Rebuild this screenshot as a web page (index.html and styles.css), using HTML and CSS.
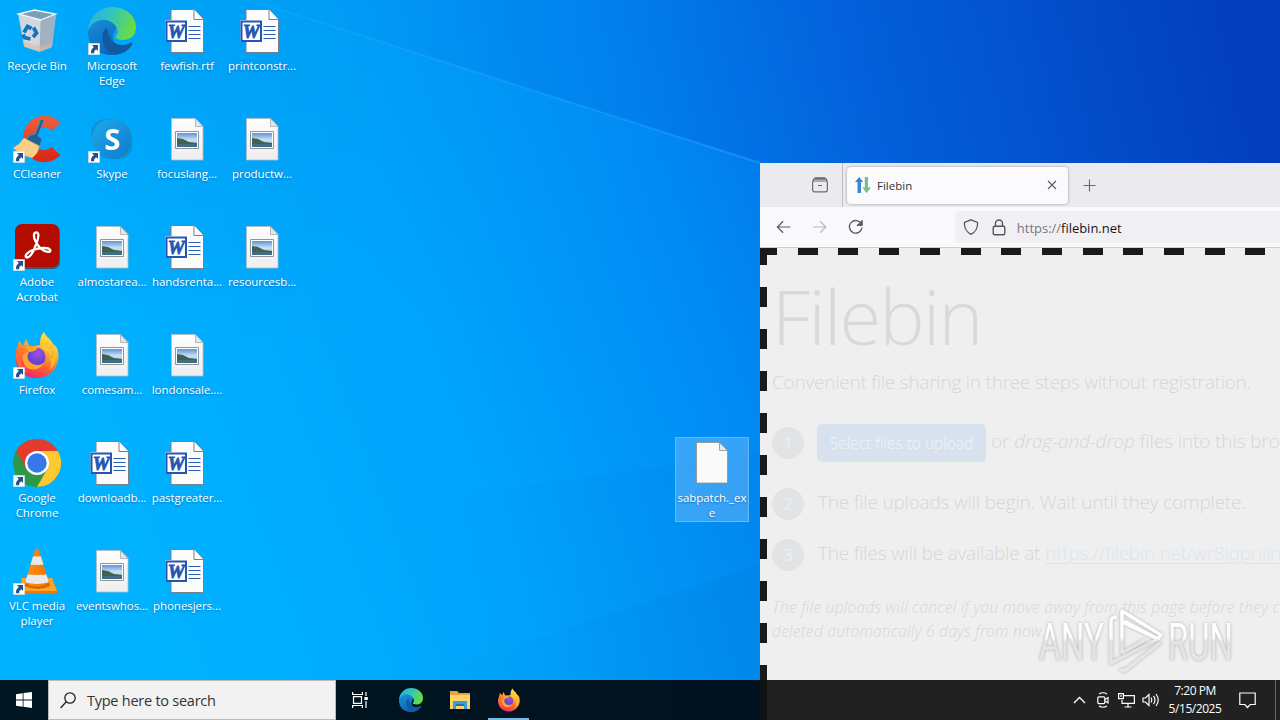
FILE: index.html
```html
<!DOCTYPE html>
<html lang="en">
<head>
<meta charset="utf-8">
<title>Desktop</title>
<link rel="stylesheet" href="styles.css">
</head>
<body>
<svg width="0" height="0" class="defs">
  <defs>
    <linearGradient id="gPaper" x1="0" y1="0" x2="0" y2="1"><stop offset="0" stop-color="#fdfdfd"/><stop offset="1" stop-color="#eeeeee"/></linearGradient>
    <linearGradient id="gSky" x1="0" y1="0" x2="0" y2="1"><stop offset="0" stop-color="#5c93dc"/><stop offset=".5" stop-color="#cfe2f2"/><stop offset="1" stop-color="#7fa9bb"/></linearGradient>
    <linearGradient id="gEdgeTop" x1="0" y1="0" x2="1" y2=".3"><stop offset="0" stop-color="#2cb0dc"/><stop offset=".5" stop-color="#30c4c0"/><stop offset="1" stop-color="#66dc48"/></linearGradient>
    <linearGradient id="gEdgeMid" x1="0" y1="0" x2=".6" y2="1"><stop offset="0" stop-color="#1890dc"/><stop offset="1" stop-color="#0c62b4"/></linearGradient>
    <linearGradient id="gFox" x1=".8" y1="0" x2=".3" y2="1"><stop offset="0" stop-color="#fff04a"/><stop offset=".35" stop-color="#ffb42c"/><stop offset=".65" stop-color="#ff6434"/><stop offset="1" stop-color="#f0206c"/></linearGradient>
    <radialGradient id="gFoxCore" cx=".6" cy=".3" r=".7"><stop offset="0" stop-color="#a050e8"/><stop offset="1" stop-color="#5540c0"/></radialGradient>
    <linearGradient id="gBin" x1="0" y1="0" x2="1" y2="1"><stop offset="0" stop-color="#a3c8dc"/><stop offset=".55" stop-color="#cfd8dc"/><stop offset="1" stop-color="#8fa6b4"/></linearGradient>
    <linearGradient id="gSkype" x1="0" y1="0" x2="1" y2="1"><stop offset="0" stop-color="#1fa8ea"/><stop offset="1" stop-color="#0d7ccc"/></linearGradient>
    <linearGradient id="gCc" x1="0" y1="0" x2="0" y2="1"><stop offset="0" stop-color="#ec5a3c"/><stop offset="1" stop-color="#d82c18"/></linearGradient>
    <linearGradient id="gCone" x1="0" y1="0" x2="1" y2="0"><stop offset="0" stop-color="#ff9818"/><stop offset="1" stop-color="#ee6a00"/></linearGradient>
    <clipPath id="cone"><path d="M22 3q2-3 4 0l10 33q-12 7-24 0z"/></clipPath>
    <symbol id="arrow" viewBox="0 0 12 12"><path fill="#fff" stroke="#c8d4dc" stroke-width=".6" d="M.3.3h11.4v11.4H.3z"/><path fill="#25508c" d="M4 2h6v6L8.200 6.300C6.500 7.500 6 8.600 6.200 10.300H3.100C2.600 7.500 3.800 5.500 5.900 4z"/></symbol>
    <symbol id="bin" viewBox="0 0 48 48">
      <path fill="url(#gBin)" stroke="#b8ccd6" stroke-width=".8" d="M5.500 7l22 6 15-5-4 32-12 4.500-15-5z"/>
      <path fill="#a0b2bf" d="M27.500 13l15-5-4 32-12 4z"/><path fill="#d4dade" d="M5.500 7l22 6-1 31-15-5z" opacity=".8"/>
      <path fill="#78a0b8" stroke="#f0f6f8" stroke-width="1.300" d="M5.500 7l16-4 21 4-15 6z"/>
      <path fill="#e8b49c" opacity=".5" d="M10.500 34l16 5 12.500-3-1 4-11.500 4.500-15-5z"/>
      <g fill="none" stroke="#1474be" stroke-width="3.800"><path d="M11 25.500l3.500-6 4 2M20.500 20.500l3 5.500-3.500 4M17.500 32l-6-1.500-1.500-3"/></g>
    </symbol>
    <symbol id="edge" viewBox="0 0 48 48">
      <path fill="url(#gEdgeMid)" d="M0 25C0 16 8 12 17 12c10 0 13 7 10 12-3 4-3 9 1 13 4 3 13 2 16 0-4 7-11 11-20 11C9 48 0 38 0 25z"/>
      <path fill="url(#gEdgeTop)" d="M0 24C1 9 12 0 24 0c14 0 24 9 24 20 0 8-5 13-13 13-6 0-8-2-7-4 3-2 2-7-1-11C19 9 4 12 0 24z"/>
      <path fill="#115a9f" d="M19 20c-8 7-5 20 4 27 9 2 17-3 21-9 1-2 0-3-2-2-3 2-6 2-9 2-9-1-13-7-14-18z"/>
    </symbol>
    <symbol id="fox" viewBox="0 0 48 48">
      <path fill="url(#gFox)" d="M6 10c2 1 3 4 4 5l3-7 4 8 10-2c0-6 1-10 4-13 2 5 7 7 9 12 2 1 3 3 4 4 5 13-3 29-19 30C10 48 2 36 2 26c0-5 2-9 4-16z"/>
      <circle cx="23" cy="26" r="9.500" fill="url(#gFoxCore)"/>
      <path fill="#ffa32c" d="M12 17c5-3 10-2 13 0-3 3-6 4-9 4-2 3-2 6 0 9 4 5 10 5 15 2-4 8-16 9-20 1-2-6-2-11 1-16z"/>
      <path fill="#ffcd36" d="M28 14c8 0 12 8 9 16 3-2 5-5 5-9 2 8-1 15-6 18 5-8 3-17-5-21-2-1-3-2-3-4z" opacity=".8"/>
      <path fill="#fc7836" d="M3 23c4-6 7-6 9-6l5 4c-5 0-8 3-8 8-1 6 3 11 8 13C8 41 2 33 3 23z" opacity=".65"/>
    </symbol>
    <symbol id="skype" viewBox="0 0 48 48">
      <circle cx="17" cy="18" r="14" fill="#138fd2" opacity=".8"/><circle cx="31" cy="31" r="13" fill="#1188cd" opacity=".8"/><circle cx="24" cy="24" r="20" fill="url(#gSkype)"/>
      <text x="24.300" y="34.500" text-anchor="middle" class="skype-s">S</text>
    </symbol>
    <symbol id="ccleaner" viewBox="0 0 48 48">
      <path fill="none" stroke="url(#gCc)" stroke-width="12" d="M43 12C33 1 15 8 16 25c0 16 17 21 27 11"/>
      <path fill="#1d6199" stroke="#4a94bd" stroke-width=".8" d="M28 4l3 1-6 16 4 3-2 7-14-6 4-5 5-1z"/>
      <path fill="#f8d089" stroke="#d9a754" stroke-width=".7" d="M11 23l15 8c0 5-3 9-7 12l-6-2-6 1-2-5-5-4 6-4z"/><path stroke="#e6bd76" stroke-width=".6" fill="none" d="M12 27l-5 8M17 29l-5 9M22 32l-5 8"/>
    </symbol>
    <symbol id="acrobat" viewBox="0 0 48 48">
      <rect x="2" y="2" width="45" height="44" rx="7" fill="#5e2632" opacity=".65"/><rect x="2" y="1" width="44" height="43" rx="7" fill="#b30b00"/>
      <path fill="none" stroke="#fff" stroke-width="2.300" stroke-linejoin="round" d="M23.500 9.500c3 0 2 6-.5 12-2.500 7-6 13-9 13-3-.5-1-5 6-7.500 6-2.200 15-3 17-.3 1.800 3-4.500 3.300-9-1-4-4-7.500-10-7-14 .2-1.300 1-2.200 2.500-2.200z"/>
    </symbol>
    <symbol id="chrome" viewBox="0 0 48 48">
      <circle cx="24" cy="24" r="24" fill="#2f9748"/>
      <path fill="#e33b2e" d="M3.200 12A24 24 0 0 1 44.800 12L24 12 13.600 30z"/>
      <path fill="#fcc932" d="M44.800 12A24 24 0 0 1 24 48l10.400-18L24 12z"/>
      <circle cx="24" cy="24" r="12" fill="#fff"/><circle cx="24" cy="24" r="9.700" fill="#3478ec"/>
    </symbol>
    <symbol id="vlc" viewBox="0 0 48 48">
      <path fill="#f07800" d="M9 31h30l5 13v3H7v-3z"/><path fill="#ffa22a" d="M9 31h30l5 13H7z"/>
      <path fill="#dd6500" d="M12 34h24l1 5q-12 6-26 0z"/>
      <g clip-path="url(#cone)"><path fill="url(#gCone)" d="M8 0h32v42H8z"/><path fill="#e9e9e9" d="M10 8q14 3 28 0v9q-14 2-28 0zM8 26q16 4 32 0v8q-16 6-32 0z"/></g>
    </symbol>
    <symbol id="word" viewBox="0 0 48 48">
      <g transform="translate(-.5 0)">
      <path fill="#fcfcfc" stroke="#74808c" d="M8.500 2.500h23l9.500 10v33H8.500z"/><path fill="#fff" stroke="#74808c" d="M31.500 2.500v10H41"/>
      <path stroke="#2c5cac" d="M26 19.500h12M26 23.500h12M26 27.500h12M26 31.500h12" stroke-width="1.200"/>
      <path fill="#fff" d="M3 13h22v22H3z"/><path fill="#fff" stroke="#2456b2" stroke-width="2" d="M4 14.500h19.500v19.500H4z"/>
      <text x="13.700" y="31" text-anchor="middle" class="word-w" textLength="17" lengthAdjust="spacingAndGlyphs">W</text>
      </g>
    </symbol>
    <symbol id="image" viewBox="0 0 48 48">
      <path fill="url(#gPaper)" stroke="#b4bcc0" stroke-width=".8" d="M8.500 3.500h24l7.500 8v33.500H8.500z"/><path fill="#dfe8ec" stroke="#a3aaae" stroke-width=".8" d="M32.500 3.500v8H40z"/>
      <path fill="#fff" stroke="#8c969c" d="M12.500 16.500h23v17h-23z"/><path fill="url(#gSky)" d="M14 18h20v14H14z"/>
      <path fill="#3d6350" d="M14 23l6 1 6 3 8 1v1H14z"/><path fill="#416e86" d="M14 29h20v3H14z"/>
    </symbol>
    <symbol id="blank" viewBox="0 0 48 48">
      <path fill="#fafafa" stroke="#948e88" stroke-width=".8" d="M8.500 3.500h23l8 8V44H8.500z"/><path fill="#e4e8ea" stroke="#948e88" stroke-width=".8" d="M31.500 3.500v8h8z"/>
    </symbol>
  </defs>
</svg>

<main class="desktop">
  <svg class="wallpaper" width="1280" height="720" viewBox="0 0 1280 720">
    <defs>
      <linearGradient id="w1" gradientUnits="userSpaceOnUse" x1="100" y1="480" x2="1240" y2="60"><stop offset="0" stop-color="#00b2ff"/><stop offset=".3" stop-color="#00a4fc"/><stop offset=".52" stop-color="#008af4"/><stop offset=".7" stop-color="#036ae2"/><stop offset="1" stop-color="#0242c2"/></linearGradient>
      <linearGradient id="w2" gradientUnits="userSpaceOnUse" x1="250" y1="0" x2="1280" y2="0"><stop offset="0" stop-color="#0090f0" stop-opacity="0"/><stop offset=".25" stop-color="#0078e8" stop-opacity=".35"/><stop offset=".6" stop-color="#0452d0" stop-opacity=".4"/><stop offset="1" stop-color="#0338b4" stop-opacity=".5"/></linearGradient>
      <linearGradient id="w3" gradientUnits="userSpaceOnUse" x1="420" y1="0" x2="800" y2="0"><stop offset="0" stop-color="#0080e0" stop-opacity="0"/><stop offset="1" stop-color="#0078d8" stop-opacity=".24"/></linearGradient>
      <linearGradient id="w4" gradientUnits="userSpaceOnUse" x1="250" y1="0" x2="760" y2="0"><stop offset="0" stop-color="#40b4ff" stop-opacity=".15"/><stop offset="1" stop-color="#40b4ff" stop-opacity=".35"/></linearGradient>
      <radialGradient id="w5" gradientUnits="userSpaceOnUse" cx="0" cy="0" r="1" gradientTransform="translate(250 0) scale(480 340)"><stop offset="0" stop-color="#0098ee" stop-opacity=".4"/><stop offset="1" stop-color="#0098ee" stop-opacity="0"/></radialGradient>
    </defs>
    <path fill="url(#w1)" d="M0 0h1280v720H0z"/>
    <path fill="url(#w5)" d="M0 0h760v400H0z"/>
    <path fill="url(#w2)" d="M250 0h1030v330L760 163z"/>
    <path stroke="url(#w4)" stroke-width="2" fill="none" d="M250 0l510 163"/>
    <path fill="url(#w3)" d="M200 530l560-77v267H200z"/>
    <path fill="url(#w3)" d="M380 690l380-125v155H380z"/>
  </svg>

  <section class="icons">
    <div class="item"><div class="pic"><svg><use href="#bin"/></svg></div><span>Recycle Bin</span></div>
    <div class="item"><div class="pic"><svg><use href="#ccleaner"/></svg><svg class="link"><use href="#arrow"/></svg></div><span>CCleaner</span></div>
    <div class="item"><div class="pic"><svg><use href="#acrobat"/></svg><svg class="link"><use href="#arrow"/></svg></div><span>Adobe<br>Acrobat</span></div>
    <div class="item"><div class="pic"><svg><use href="#fox"/></svg><svg class="link"><use href="#arrow"/></svg></div><span>Firefox</span></div>
    <div class="item"><div class="pic"><svg><use href="#chrome"/></svg><svg class="link"><use href="#arrow"/></svg></div><span>Google<br>Chrome</span></div>
    <div class="item"><div class="pic"><svg><use href="#vlc"/></svg><svg class="link"><use href="#arrow"/></svg></div><span>VLC media<br>player</span></div>

    <div class="item"><div class="pic"><svg><use href="#edge"/></svg><svg class="link"><use href="#arrow"/></svg></div><span>Microsoft<br>Edge</span></div>
    <div class="item"><div class="pic"><svg><use href="#skype"/></svg><svg class="link"><use href="#arrow"/></svg></div><span>Skype</span></div>
    <div class="item"><div class="pic"><svg><use href="#image"/></svg></div><span>almostarea...</span></div>
    <div class="item"><div class="pic"><svg><use href="#image"/></svg></div><span>comesam...</span></div>
    <div class="item"><div class="pic"><svg><use href="#word"/></svg></div><span>downloadb...</span></div>
    <div class="item"><div class="pic"><svg><use href="#image"/></svg></div><span>eventswhos...</span></div>

    <div class="item"><div class="pic"><svg><use href="#word"/></svg></div><span>fewfish.rtf</span></div>
    <div class="item"><div class="pic"><svg><use href="#image"/></svg></div><span>focuslang...</span></div>
    <div class="item"><div class="pic"><svg><use href="#word"/></svg></div><span>handsrenta...</span></div>
    <div class="item"><div class="pic"><svg><use href="#image"/></svg></div><span>londonsale....</span></div>
    <div class="item"><div class="pic"><svg><use href="#word"/></svg></div><span>pastgreater...</span></div>
    <div class="item"><div class="pic"><svg><use href="#word"/></svg></div><span>phonesjers...</span></div>

    <div class="item"><div class="pic"><svg><use href="#word"/></svg></div><span>printconstr...</span></div>
    <div class="item"><div class="pic"><svg><use href="#image"/></svg></div><span>productw...</span></div>
    <div class="item"><div class="pic"><svg><use href="#image"/></svg></div><span>resourcesb...</span></div>
  </section>

  <div class="item selected"><div class="pic"><svg><use href="#blank"/></svg></div><span>sabpatch._ex<br>e</span></div>

  <section class="browser">
    <header class="tabs">
      <div class="tabs-left"><svg width="18" height="18" viewBox="0 0 18 18" fill="none" stroke="#6a6a74" stroke-width="1.200"><path d="M3.500 1.800h11M2.800 5h12.400a1.200 1.200 0 0 1 1.200 1.200v7.600a2 2 0 0 1-2 2H3.600a2 2 0 0 1-2-2V6.200A1.200 1.200 0 0 1 2.800 5zM1.600 6.500l1-3.300h12.800l1 3.300M7 9.500h4"/></svg></div>
      <div class="tab">
        <svg width="16" height="16" viewBox="0 0 16 16"><path fill="#3a86d0" d="M4.200 0l4 5H6v11H2.500V5H0z"/><path fill="#7cbc84" d="M9.800 0h3.200v10.500H16L11.500 16l-4.200-5.500h2.500z"/></svg>
        <span class="tab-title">Filebin</span>
        <svg class="close" width="10" height="10" viewBox="0 0 10 10" stroke="#5a5a62" stroke-width="1.100"><path d="M1 1l8 8M9 1L1 9"/></svg>
      </div>
      <svg class="plus" width="13" height="13" viewBox="0 0 13 13" stroke="#6a6a74" stroke-width="1.100"><path d="M6.500.5v12M.5 6.500h12"/></svg>
    </header>
    <nav class="toolbar">
      <svg width="16" height="16" viewBox="0 0 16 16" fill="none" stroke="#5a5a62" stroke-width="1.300"><path d="M15 8H1.500M7.500 2L1.500 8l6 6"/></svg>
      <svg width="16" height="16" viewBox="0 0 16 16" fill="none" stroke="#b9b9c0" stroke-width="1.300"><path d="M1 8h13.500M8.500 2l6 6-6 6"/></svg>
      <svg width="16" height="16" viewBox="0 0 16 16" fill="none" stroke="#5a5a62" stroke-width="1.400"><path d="M14 5A6.600 6.600 0 1 0 14.600 8.500M14.500 1v5h-5"/><path d="M14.500 2v4h-4z" fill="#5a5a62"/></svg>
      <div class="url">
        <svg width="16" height="16" viewBox="0 0 16 16" fill="none" stroke="#55555e" stroke-width="1.300"><path d="M8 .8l6.500 2.700C15 9 12 13.500 8 15.300 4 13.500 1 9 1.500 3.500z"/></svg>
        <svg width="14" height="17" viewBox="0 0 14 17" fill="none" stroke="#55555e" stroke-width="1.400"><rect x="1.200" y="7.200" width="11.600" height="8.600" rx="1.500"/><path d="M3.500 7V4.500a3.500 3.500 0 0 1 7 0V7"/></svg>
        <span class="address"><i>https://</i>filebin.net</span>
      </div>
    </nav>
    <article class="page">
      <h1>Filebin</h1>
      <p class="lead">Convenient file sharing in three steps without registration.</p>
      <div class="step s1"><b>1</b><span class="upload">Select files to upload</span><span class="or">or <em>drag-and-drop</em> files into this browser</span></div>
      <div class="step s2"><b>2</b><span class="t2">The file uploads will begin. Wait until they complete.</span></div>
      <div class="step s3"><b>3</b><span class="t3">The files will be available at <u>https://filebin.net/wr8jqpnjin</u></span></div>
      <p class="note"><span class="n1">The file uploads will cancel if you move away from this page before they complete.</span><br><span class="n2">deleted automatically 6 days from now.</span></p>
    </article>
  </section>

  <svg class="watermark" width="210" height="76" viewBox="0 0 210 76">
    <defs><linearGradient id="wm" gradientUnits="userSpaceOnUse" x1="0" y1="8" x2="0" y2="66"><stop offset="0" stop-color="#fff"/><stop offset=".42" stop-color="#fcfcfc"/><stop offset=".5" stop-color="#e2e2e2"/><stop offset="1" stop-color="#e8e8e8"/></linearGradient></defs>
    <g fill="url(#wm)">
      <text x="9" y="55" textLength="65" lengthAdjust="spacingAndGlyphs">ANY</text>
      <text x="138" y="55" textLength="65" lengthAdjust="spacingAndGlyphs">RUN</text>
    </g>
    <g fill="none" stroke="url(#wm)" stroke-width="3.500" stroke-linejoin="round">
      <path d="M92 48V6l39 24-3 4-34-18"/><path d="M87 12q-6 0-6 4v42l47-24-34-16"/><path d="M90 64q3 3 7 0l34-27M92 48l23-13"/>
    </g>
  </svg>

  <footer class="taskbar">
    <div class="start"><svg width="16" height="16" viewBox="0 0 16 16" fill="#fff"><path d="M0 2.200L6.700 1.200V7.500H0zM7.500 1.100L16 0V7.500H7.500zM0 8.400H6.700V14.700L0 13.800zM7.500 8.400H16V16L7.500 14.800z"/></svg></div>
    <div class="search"><svg width="16" height="17" viewBox="0 0 16 17" fill="none" stroke="#222" stroke-width="1.300"><circle cx="10" cy="6" r="5.200"/><path d="M6.300 9.800L.6 16"/></svg><span>Type here to search</span></div>
    <div class="task"><svg width="16" height="16" viewBox="0 0 16 16" fill="none" stroke="#fff" stroke-width="1.200"><path d="M.6 0v2.500h9.800V0M.6 16v-2.500h9.800V16M1.500 4.600h8v6.800h-8zM14 0v4M14 9v7"/><path fill="#fff" d="M13 5.500h2.200v2H13z"/></svg></div>
    <div class="task"><svg width="24" height="24"><use href="#edge"/></svg></div>
    <div class="task"><svg width="22" height="20" viewBox="0 0 22 20"><path fill="#e8a33a" d="M1 1h7l2 2h11v4H1z"/><path fill="#ffd364" d="M1 5h20v14H1z"/><path fill="#3b9ad9" d="M4 11h14v8h-3v-4H7v4H4z"/><path fill="#1c74b4" d="M7 14h8v2H7z"/></svg></div>
    <div class="task active"><svg width="24" height="24"><use href="#fox"/></svg></div>
    <div class="tray">
      <svg width="13" height="8" viewBox="0 0 13 8" fill="none" stroke="#fff" stroke-width="1.300"><path d="M1 7l5.500-5.500L12 7"/></svg>
      <svg width="12" height="16" viewBox="0 0 12 16" fill="none" stroke="#fff" stroke-width="1.200"><rect x=".8" y="4.800" width="7" height="6.800" rx="1"/><path d="M8 7.500l3-2v5.500l-3-2M2 2q4-2.500 8 0M2 14q4 2.500 8 0"/></svg>
      <svg width="17" height="15" viewBox="0 0 17 15" fill="none" stroke="#fff" stroke-width="1.200"><path d="M6 2.600h10.400v7.800H4V7M10 10.500V14M6.500 14h7M.6.600h4.800v5H.6zM3 2v2"/></svg>
      <svg width="17" height="14" viewBox="0 0 17 14" fill="none" stroke="#fff" stroke-width="1.200"><path d="M1 5h2.500L7 1.500v11L3.500 9H1zM9 4.500q1.500 2.500 0 5M11.500 2.800q3 4.200 0 8.400M14 1q4.500 6 0 12"/></svg>
      <div class="clock"><span class="time">7:20 PM</span><span class="date">5/15/2025</span></div>
      <svg class="action" width="17" height="17" viewBox="0 0 17 17" fill="none" stroke="#fff" stroke-width="1.200"><path d="M.8 1h15.400v11.500h-5L8.500 15.500l-2.700-3h-5z"/></svg>
      <div class="peek"></div>
    </div>
  </footer>
</main>
</body>
</html>
```

FILE: styles.css
```css
* { box-sizing: border-box; }
body { margin: 0; font-family: "Open Sans", "Noto Sans", sans-serif; overflow: hidden; }
.defs { position: absolute; }
.desktop { position: relative; width: 1280px; height: 720px; overflow: hidden; background: #00a8fc; }
.wallpaper { position: absolute; left: 0; top: 0; }

.icons { position: absolute; left: 0; top: 7px; display: grid; grid-auto-flow: column; grid-template-rows: repeat(6, 108px); grid-auto-columns: 75px; }
.item { display: flex; flex-direction: column; align-items: center; width: 74px; }
.item > span { margin-top: 3px; font-size: 11.5px; line-height: 15px; color: #fff; text-align: center; white-space: nowrap; letter-spacing: -.05px; text-shadow: 0 1px 2px rgba(0, 40, 90, .45); }
.pic { position: relative; width: 48px; height: 48px; }
.pic svg { display: block; width: 48px; height: 48px; }
.pic .link { position: absolute; left: 0; bottom: 0; width: 12px; height: 12px; }
.word-w { font: italic bold 18px "Liberation Serif", serif; fill: #2456b2; stroke: #2456b2; stroke-width: .8px; }
.skype-s { font: bold 29px "Open Sans", sans-serif; fill: #fff; }
.selected { position: absolute; left: 675px; top: 437px; height: 85px; padding-top: 1px; background: rgba(110, 185, 250, .5); border: 1px solid #62bafa; }

.browser { position: absolute; left: 760px; top: 163px; width: 520px; height: 517px; overflow: hidden; background: #efefef; }
.tabs { display: flex; align-items: center; height: 44px; background: #eaeaef; }
.tabs-left { display: flex; align-items: center; justify-content: flex-end; width: 83px; height: 44px; padding-right: 13px; border-right: 1px solid #bdbdc4; }
.tab { display: flex; align-items: center; width: 221px; height: 37px; margin-left: 4px; padding: 0 11px 0 8px; border-radius: 4px; background: #fbfbfd; box-shadow: 0 0 3px rgba(0, 0, 0, .35); }
.tab-title { flex: 1; margin-left: 6px; font-size: 11.5px; color: #33333a; }
.plus { margin-left: 15px; }
.toolbar { display: flex; align-items: center; gap: 20px; height: 41px; padding-left: 16px; background: #f9f9fb; border-bottom: 1px solid #ccccd1; }
.toolbar > svg:nth-child(n + 2) { position: relative; left: 1px; }
.url { display: flex; align-items: center; align-self: flex-start; gap: 13px; width: 340px; height: 32px; margin: 4px 0 0 73px; padding-left: 8px; border-radius: 4px 0 0 4px; background: #f0f0f4; }
.address { margin: 1px 0 0 -2px; font-size: 13px; letter-spacing: -.02px; color: #15141a; white-space: nowrap; }
.address i { font-style: normal; color: #77767e; }
.page { height: 432px; padding: 7px 0 0 12px; color: #d6d6d6; font-weight: 300; white-space: nowrap;
  background:
    linear-gradient(#1a1a1a, #1a1a1a) 0 0 / 17px 7px no-repeat,
    repeating-linear-gradient(90deg, #1a1a1a 0 17px, #efefef 17px 37.700px, #1a1a1a 37.700px 40.700px) 0 0 / 100% 7px no-repeat,
    repeating-linear-gradient(180deg, #1a1a1a 0 17px, #efefef 17px 39px, #1a1a1a 39px 42px) 0 0 / 7px 100% no-repeat,
    #efefef; }
.page h1 { margin: 13px 0 0; font-size: 76px; line-height: 96px; font-weight: 300; color: #d9d9d9; letter-spacing: -1.700px; }
.lead { margin: 4px 0 0; font-size: 19px; line-height: 28px; letter-spacing: -.23px; }
.step { display: flex; align-items: center; font-size: 19px; }
.step b { flex: none; width: 32px; height: 32px; border-radius: 50%; background: #e2e3e4; color: #eaf0f4; font-size: 16px; line-height: 32px; font-weight: 400; text-align: center; }
.s1 { height: 38px; margin-top: 28px; }
.s2 { height: 32px; margin-top: 26px; }
.s3 { height: 32px; margin-top: 19px; }
.upload { flex: none; width: 169px; height: 38px; margin-left: 13px; border-radius: 5px; background: #d8e2ef; color: #edf3f9; font-size: 15.500px; line-height: 38px; text-align: center; }
.or { margin: -5px 0 0 5px; letter-spacing: -.1px; }
.t2, .t3 { margin: -4px 0 0 14px; letter-spacing: -.2px; }
.step u { color: #dae5f0; text-underline-offset: 3px; text-decoration-thickness: 1px; }
.note { margin: 24px 0 0; font-size: 15.500px; line-height: 24px; letter-spacing: .28px; font-style: italic; }

.watermark { position: absolute; left: 1030px; top: 605px; filter: drop-shadow(0 0 1.500px rgba(0, 0, 0, .28)); font: 52px Roboto, sans-serif; }

.taskbar { position: absolute; left: 0; top: 680px; width: 1280px; height: 40px; display: flex; background: linear-gradient(90deg, #001823 0, #00151f 300px, #001220 759px, #101113 760px, #101113 767px, #212121 767px); }
.start { display: flex; align-items: center; justify-content: center; width: 48px; }
.search { display: flex; align-items: center; width: 288px; padding-left: 11px; border: 1px solid #b8bcbe; background: #f2f2f2; color: #333; }
.search span { margin-left: 11px; font-size: 14.500px; letter-spacing: -.25px; }
.task { display: flex; align-items: center; justify-content: center; width: 48px; margin-right: 1px; }
.search + .task { margin-right: 3px; }
.active { width: 41px; margin-left: 3px; border-bottom: 2px solid #76b9ed; padding-top: 2px; }
.tray { display: flex; align-items: center; margin-left: auto; color: #fff; font-size: 12px; gap: 11px; }
.tray svg { flex: none; }
.tray svg:nth-of-type(1), .tray svg:nth-of-type(2) { position: relative; left: -1px; }
.tray svg:nth-of-type(3) { margin-left: -3px; }
.tray svg:nth-of-type(4) { margin-left: -4px; }
.clock { display: flex; flex-direction: column; align-items: center; justify-content: center; width: 54px; margin-left: -2px; line-height: 18px; letter-spacing: -.45px; white-space: nowrap; }
.action { margin-left: 6px; }
.peek { width: 5px; height: 40px; margin-left: 8px; border-left: 1px solid #666; }
```
